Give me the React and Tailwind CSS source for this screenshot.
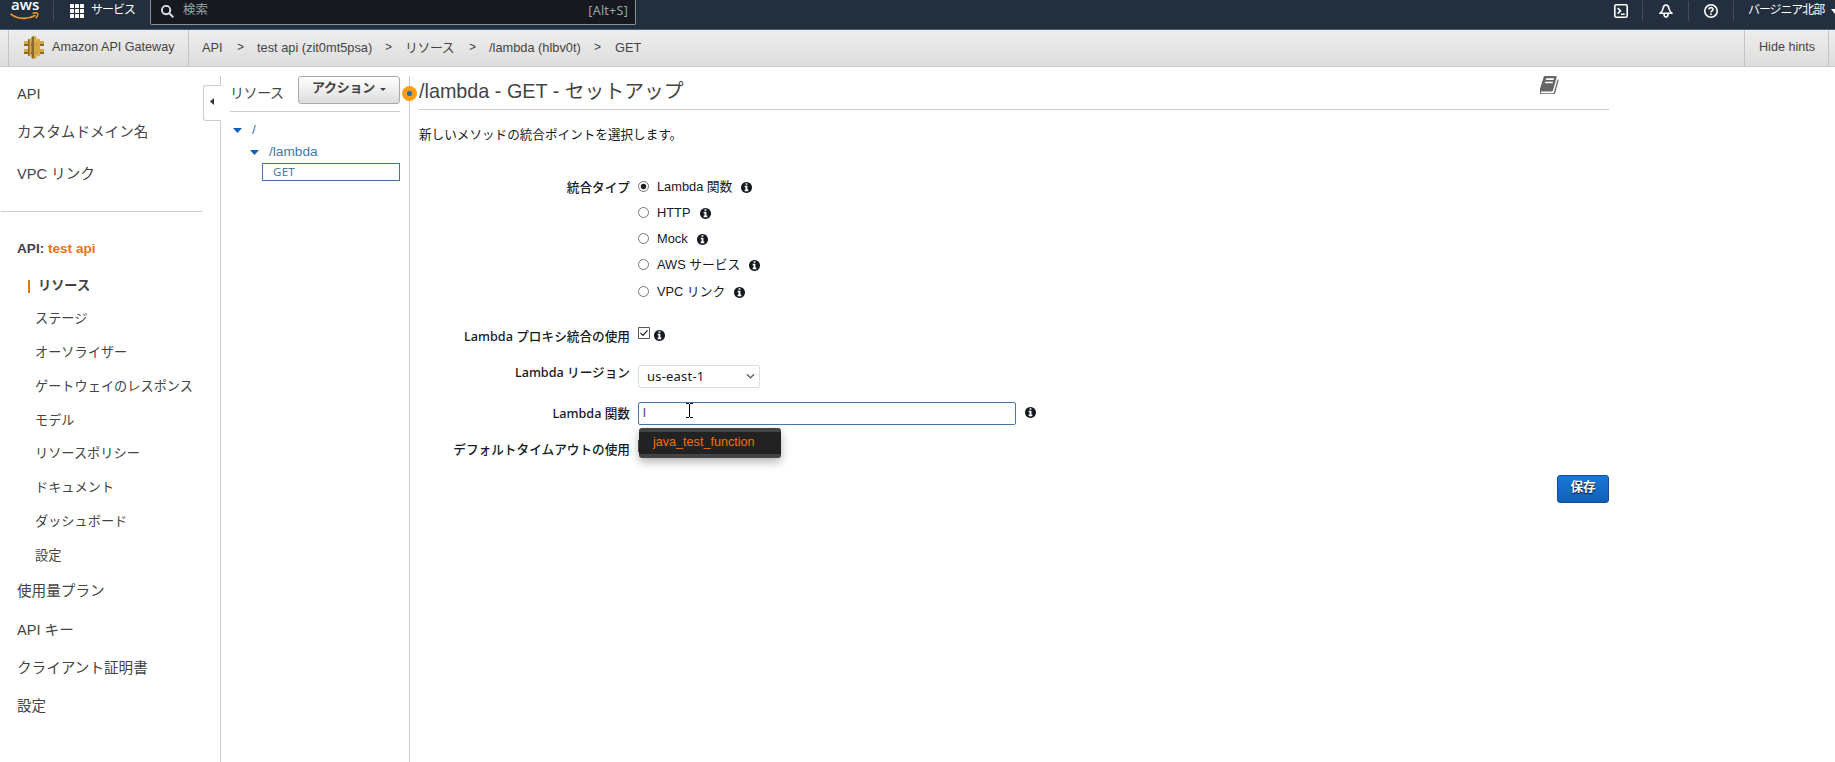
import React from "react";

const jp = "font-['Liberation_Sans','Noto_Sans_CJK_JP',sans-serif]";

function InfoIcon({ className = "" }) {
  return (
    <svg viewBox="128 128 1536 1536" className={"h-[11px] w-[11px] shrink-0 " + className} fill="#16191f">
      <path d="M1152 1376v-160q0-14-9-23t-23-9h-96v-512q0-14-9-23t-23-9h-320q-14 0-23 9t-9 23v160q0 14 9 23t23 9h96v320h-96q-14 0-23 9t-9 23v160q0 14 9 23t23 9h448q14 0 23-9t9-23zm-128-896v-160q0-14-9-23t-23-9h-192q-14 0-23 9t-9 23v160q0 14 9 23t23 9h192q14 0 23-9t9-23zm640 416q0 209-103 385.500t-279.500 279.500-385.500 103-385.500-103-279.500-279.500-103-385.500 103-385.500 279.500-279.500 385.500-103 385.500 103 279.500 279.500 103 385.500z" />
    </svg>
  );
}

function BookIcon() {
  return (
    <svg viewBox="60 200 1650 1400" preserveAspectRatio="none" className="ml-auto mr-[50px] h-[18px] w-[19px]" fill="#666">
      <path d="M1639 478q40 57 18 129l-275 906q-19 64-76.500 107.500t-122.500 43.500h-923q-77 0-148.500-53.500t-99.500-131.500q-24-67-2-127 0-4 3-27t4-37q1-8-3-21.500t-3-19.500q2-11 8-21t16.500-23.500 16.500-23.500q23-38 45-91.500t30-91.500q3-10 .5-30t-.5-28q3-11 17-28t17-23q21-36 42-92t25-90q1-9-2.500-32t.5-28q4-13 22-30.500t22-22.500q19-26 42.500-84.500t27.500-96.500q1-8-3-25.500t-2-26.500q2-8 9-18t18-23 17-21q8-12 16.500-30.500t15-35 16-36 19.500-32 26.500-23.500 36-11.500 47.500 5.500l-1 3q38-9 51-9h761q74 0 114 56t18 130l-274 906q-36 119-71.500 153.500t-128.500 34.500h-869q-27 0-38 15-11 16-1 43 24 70 144 70h923q29 0 56-15.500t35-41.500l300-987q7-22 5-57 38 15 59 43zm-1064 2q-4 13 2 22.500t20 9.500h608q13 0 25.500-9.500t16.500-22.500l21-64q4-13-2-22.500t-20-9.500h-608q-13 0-25.500 9.500t-16.500 22.500zm-83 256q-4 13 2 22.500t20 9.500h608q13 0 25.500-9.500t16.500-22.500l21-64q4-13-2-22.500t-20-9.500h-608q-13 0-25.500 9.500t-16.500 22.500z" />
    </svg>
  );
}

function Header() {
  return (
    <header className="flex h-[30px] items-start overflow-hidden border-b border-[#545b72] bg-[#232f3e] text-white">
      <div className="ml-[10px] flex w-[43px] flex-col">
        <span className="h-3 pl-[1px] font-['Open_Sans',sans-serif] text-[15px] leading-[9px] font-semibold">aws</span>
        <svg viewBox="0 0 29 8" className="h-[8px] w-[29px]" fill="none" stroke="#f79a1c">
          <path d="M0.500 1.800C8 7.600 18 7.800 25.500 3.300" strokeWidth="1.700" />
          <path d="M22.500 1.400c2-.6 4.300-.8 5 0s-.2 3.200-1.700 4.900" strokeWidth="1.400" />
        </svg>
      </div>
      <div className="mt-[1px] h-5 w-px bg-[#414c58]" />
      <svg viewBox="0 0 14 14" className="mt-1 ml-4 h-[14px] w-[14px]" fill="#fff">
        {[0, 5, 10].map((y) => [0, 5, 10].map((x) => <rect key={x + "-" + y} x={x} y={y} width="4" height="4" rx=".5" />))}
      </svg>
      <span className="ml-[7px] w-[59px] whitespace-nowrap text-[12px] leading-[21px] tracking-[-1px]">サービス</span>
      <div className="flex h-[25px] w-[486px] items-start rounded-b-[2px] border border-t-0 border-[#879596] bg-[#161920] text-[#95a5a6]">
        <svg viewBox="0 0 14 14" className="mt-[5px] ml-[10px] h-[13px] w-[13px]" fill="none" stroke="#e3e6e8" strokeWidth="2">
          <circle cx="5.500" cy="5.500" r="4.500" />
          <path d="M9 9l4.200 4.200" />
        </svg>
        <span className="ml-[9px] text-[12.500px] leading-[21px]">検索</span>
        <span className="mr-[7px] ml-auto font-['Noto_Sans',sans-serif] text-[12.500px] leading-[21px] tracking-[0.250px]">[Alt+S]</span>
      </div>
      <div className="ml-auto flex w-[221px] shrink-0">
        <svg viewBox="0 0 14 14" className="mt-1 h-[14px] w-[14px] shrink-0" fill="none" stroke="#fff" strokeWidth="1.600" strokeLinejoin="round">
          <rect x=".8" y=".8" width="12.400" height="12.400" rx="1.500" />
          <path d="M3.600 4l3 2.800-3 2.800M7 10.200h3.700" />
        </svg>
        <div className="ml-[14px] mt-[1px] h-5 w-px shrink-0 bg-[#414c58]" />
        <svg viewBox="0 0 14 14" className="mt-1 ml-4 h-[14px] w-[14px] shrink-0" fill="none" stroke="#fff" strokeWidth="1.600" strokeLinejoin="round">
          <path d="M7 1C4.900 1 4.300 2.600 4.100 4.300 3.900 6.500 3 7.700.9 9.300h12.200C11 7.700 10.100 6.500 9.900 4.300 9.700 2.600 9.100 1 7 1z" />
          <path d="M5 9.800c0 2.200.8 3.300 2 3.300s2-1.100 2-3.300" />
        </svg>
        <div className="ml-[15px] mt-[1px] h-5 w-px shrink-0 bg-[#414c58]" />
        <svg viewBox="0 0 14 14" className="mt-1 ml-[15px] h-[14px] w-[14px] shrink-0" fill="none" stroke="#fff" strokeWidth="1.600">
          <circle cx="7" cy="7" r="6.200" />
          <path d="M5 5.600c0-2.600 4-2.500 4-.2C9 7 7 6.900 7 8.400M7 9.500v1.500" />
        </svg>
        <div className="ml-[15px] mt-[1px] h-5 w-px shrink-0 bg-[#414c58]" />
        <span className="ml-[14px] w-[83px] shrink-0 whitespace-nowrap text-[12px] leading-[21px] tracking-[-1.100px]">バージニア北部</span>
        <svg viewBox="0 0 8 5" className="mt-[9px] h-[5px] w-[8px] shrink-0" fill="#fff">
          <path d="M0 0h8L4 5z" />
        </svg>
      </div>
    </header>
  );
}

function GatewayIcon() {
  return (
    <svg viewBox="0 0 20 23" className="-mt-px h-[23px] w-[20px] shrink-0">
      <path fill="#d9a741" d="M0 5h4V3.500l3-1V5h6V2.500l3 1V5h4v5h-4v3h4v5h-4v1.500l-3 1V18H7v2.500l-3-1V18H0v-5h4v-3H0z" />
      <path fill="#876929" d="M0 8h4v2H0zM0 16h4v2H0zM16 8h4v2h-4zM16 16h4v2h-4zM4 3.500l1.500-.5v17L4 19.500zM7 8h6v2H7zM7 16h6v2H7z" />
      <path fill="#876929" d="M7.500 1L10 0v23l-2.500-1z" />
      <path fill="#d9a741" d="M10 0l2.500 1v21L10 23z" />
    </svg>
  );
}

function Breadcrumbs() {
  return (
    <nav className="flex h-[37px] border-b border-[#ccc] bg-linear-to-b from-[#eee] to-[#ddd] pr-[6px] pl-2 text-[12.800px] leading-[35px] whitespace-nowrap text-[#444]">
      <div className="flex w-[181px] items-center border-x border-[#c4c4c4] pl-[15px]">
        <GatewayIcon />
        <span className="-mt-px ml-2 text-[12.600px]">Amazon API Gateway</span>
      </div>
      <span className="ml-[13px] w-[35px]">API</span>
      <span className="w-[20px] text-[12px]">&gt;</span>
      <span className="w-[128px]">test api (zit0mt5psa)</span>
      <span className="w-[20px] text-[12px]">&gt;</span>
      <span className="w-[64px] tracking-[-0.300px]">リソース</span>
      <span className="w-[20px] text-[12px]">&gt;</span>
      <span className="w-[105px]">/lambda (hlbv0t)</span>
      <span className="w-[21px] text-[12px]">&gt;</span>
      <span>GET</span>
      <div className="ml-auto w-[85px] border-x border-[#c4c4c4] pl-[14px] text-[12.600px]">Hide hints</div>
    </nav>
  );
}

const subItems = [
  ["ステージ", "mt-[13px]"],
  ["オーソライザー", "mt-[14px]"],
  ["ゲートウェイのレスポンス", "mt-[14px]"],
  ["モデル", "mt-[14px]"],
  ["リソースポリシー", "mt-[13px]"],
  ["ドキュメント", "mt-[14px]"],
  ["ダッシュボード", "mt-[14px]"],
  ["設定", "mt-[14px]"],
];

function Sidebar() {
  return (
    <aside className="flex w-[203px] shrink-0 flex-col pt-[17px] text-[14.600px] leading-5 whitespace-nowrap text-[#444]">
      <span className="ml-[17px]">API</span>
      <span className="mt-[18px] ml-[17px]">カスタムドメイン名</span>
      <span className="mt-[22px] ml-[17px]">VPC リンク</span>
      <div className="mt-[27px] ml-px h-px w-[201px] bg-[#ccc]" />
      <span className="mt-[27px] ml-[17px] text-[13.600px] font-bold">
        API: <span className="text-[#ec7211]">test api</span>
      </span>
      <span className="mt-[17px] ml-[28px] flex items-center text-[13.200px] font-bold">
        <span className="mr-[8px] h-[13px] w-[2px] bg-[#e07700]" />
        リソース
      </span>
      {subItems.map(([label, gap]) => (
        <span key={label} className={"ml-[35px] text-[13.200px] " + gap}>{label}</span>
      ))}
      <span className="mt-[15px] ml-[17px]">使用量プラン</span>
      <span className="mt-[19px] ml-[17px]">API キー</span>
      <span className="mt-[18px] ml-[17px]">クライアント証明書</span>
      <span className="mt-[18px] ml-[17px]">設定</span>
    </aside>
  );
}

function Caret() {
  return (
    <svg viewBox="0 0 9 5" className="h-[5px] w-[9px] shrink-0" fill="#0d62bd">
      <path d="M0 0h9L4.500 5z" />
    </svg>
  );
}

function ResourceTree() {
  return (
    <section className="flex w-[206px] shrink-0 pt-[9px]">
      <div className="flex w-[18px] shrink-0 flex-col">
        <div className="ml-auto h-[9px] w-px bg-[#ccc]" />
        <div className="flex h-[36px] items-center rounded-l-[3px] border border-r-0 border-[#ccc] pl-[6px]">
          <svg viewBox="0 0 4 7" className="-mt-[3px] h-[7px] w-[4px]" fill="#333">
            <path d="M4 0v7L0 3.500z" />
          </svg>
        </div>
        <div className="ml-auto w-px flex-1 bg-[#ccc]" />
      </div>
      <div className="ml-[9px] w-[170px] text-[#4577a8]">
        <div className="flex h-[36px] items-start border-b border-[#ccc]">
          <span className="mt-[7px] w-[68px] text-[14px] leading-5 tracking-[-0.400px] whitespace-nowrap text-[#444]">リソース</span>
          <button className="flex h-[28px] w-[102px] items-start justify-center rounded-[3px] border border-[#aaa] bg-linear-to-b from-white to-[#ddd] pt-[1px] text-[13px] leading-5 font-bold text-[#444]">
            <span className="tracking-[-0.300px]">アクション</span>
            <svg viewBox="0 0 6 3" className="mt-[10px] ml-[5px] h-[3px] w-[6px]" fill="#444">
              <path d="M0 0h6L3 3z" />
            </svg>
          </button>
        </div>
        <div className="mt-2 flex h-[20px] items-center pl-[3px] text-[13.700px] leading-5">
          <Caret />
          <span className="ml-[10px]">/</span>
        </div>
        <div className="mt-[2px] flex h-[20px] items-center pl-[20px] text-[13.700px] leading-5">
          <Caret />
          <span className="ml-[10px]">/lambda</span>
        </div>
        <div className="mt-[1px] ml-8 h-[18px] border border-[#4577a8] pl-[10px] font-['Noto_Sans',sans-serif] text-[11.500px] leading-[16px] tracking-[0.300px]">GET</div>
      </div>
    </section>
  );
}

function Radio({ checked }) {
  return (
    <svg viewBox="0 0 11 11" className="-mt-[2px] h-[11px] w-[11px] shrink-0">
      <circle cx="5.500" cy="5.500" r="5" fill="#fff" stroke="#767676" />
      {checked && <circle cx="5.500" cy="5.500" r="2.700" fill="#222" />}
    </svg>
  );
}

const types = [
  ["Lambda 関数", "mt-0", "w-[83px]", true],
  ["HTTP", "mt-[6px]", "w-[42px]"],
  ["Mock", "mt-[6px]", "w-[39px]"],
  ["AWS サービス", "mt-[6px]", "w-[91px]"],
  ["VPC リンク", "mt-[7px]", "w-[76px]"],
];

function Label({ children, className = "" }) {
  return (
    <div className={"h-5 w-[211px] shrink-0 text-right font-['Noto_Sans','Noto_Sans_CJK_JP',sans-serif] text-[12.650px] font-medium whitespace-nowrap " + className}>
      {children}
    </div>
  );
}

function Main() {
  return (
    <main className="flex min-w-0 flex-1 pt-[9px] text-[12.800px] leading-5 text-[#16191f]">
      <div className="relative w-px shrink-0 bg-[#ccc]">
        <div className="absolute top-[10px] left-[-7px] flex h-[15px] w-[15px] items-center justify-center rounded-full bg-[#ff9d0f]">
          <div className="h-[5px] w-[5px] rounded-full bg-[#146eb4]" />
        </div>
      </div>
      <div className="ml-[9px] w-[1190px]">
        <div className="flex h-[34px] items-start border-b border-[#ccc]">
          <h1 className="text-[19.800px] leading-[31px] whitespace-nowrap text-[#444]">/lambda - GET - セットアップ</h1>
          <BookIcon />
        </div>
        <p className="mt-[15px] text-[12.600px]">新しいメソッドの統合ポイントを選択します。</p>
        <div className="mt-[32px] flex">
          <Label>統合タイプ</Label>
          <div className="ml-[8px]">
            {types.map(([label, gap, width, checked]) => (
              <div key={label} className={"flex h-5 items-center " + gap}>
                <Radio checked={checked} />
                <span className={"ml-[8px] whitespace-nowrap " + width}>{label}</span>
                <InfoIcon className="ml-[1px]" />
              </div>
            ))}
          </div>
        </div>
        <div className="mt-[24px] flex">
          <Label>Lambda プロキシ統合の使用</Label>
          <svg viewBox="0 0 12 12" className="mt-[1px] ml-2 h-3 w-3" fill="#fff" stroke="#555">
            <path d="M.5.5h11v11H.5z" />
            <path d="M2.500 5.800l2.500 2.500 4.500-5" fill="none" stroke="#222" strokeWidth="1.200" />
          </svg>
          <InfoIcon className="mt-1 ml-1" />
        </div>
        <div className="mt-[17px] flex">
          <Label className="-mt-px">Lambda リージョン</Label>
          <div className="mt-[2px] ml-2 flex h-[23px] w-[122px] items-center justify-between rounded-[2px] border border-[#ddd] pr-1 pb-px pl-2 font-['Noto_Sans',sans-serif] text-[13px] tracking-[0.200px]">
            us-east-1
            <svg viewBox="0 0 10 6" className="h-[6px] w-[9px]" fill="none" stroke="#666" strokeWidth="1.600">
              <path d="M1 1l4 4 4-4" />
            </svg>
          </div>
        </div>
        <div className="mt-[14px] flex h-[23px]">
          <Label className="mt-[1px]">Lambda 関数</Label>
          <div className="relative ml-2 flex h-[23px] w-[378px] rounded-[2px] border border-[#4577a8] pl-1 leading-[19px] text-[#444]">
            l
            <svg viewBox="0 0 7 15" className="absolute top-0 left-[47px] h-[15px] w-[7px]" fill="none" stroke="#000">
              <path d="M0 .5h3M4 .5h3M0 14.500h3M4 14.500h3M3.500 1v13" />
            </svg>
            <div className="absolute top-[25px] left-0 z-10 h-[30px] w-[142px] rounded-[3px] bg-[#444] py-1 shadow-[0_4px_10px_rgba(0,0,0,0.3)]">
              <div className="h-[22px] bg-[#222] pl-[14px] text-[12.600px] leading-[20px] text-[#ec7211]">java_test_function</div>
            </div>
          </div>
          <InfoIcon className="mt-[5px] ml-[9px]" />
        </div>
        <div className="mt-[14px] flex">
          <Label>デフォルトタイムアウトの使用</Label>
          <div className="mt-[1px] ml-2 h-3 w-3 border border-[#555]" />
        </div>
        <div className="mt-[16px] flex justify-end">
          <button className="h-[28px] w-[52px] rounded-[3px] border border-[#0e4f98] bg-linear-to-b from-[#1977d8] to-[#1060b8] pb-[4px] text-[12.600px] leading-5 font-bold text-white text-shadow-[0_1px_1px_#000]">保存</button>
        </div>
      </div>
    </main>
  );
}

export default function App() {
  return (
    <div className={"flex h-[762px] w-[1835px] flex-col overflow-hidden bg-white " + jp}>
      <Header />
      <Breadcrumbs />
      <div className="flex min-h-0 flex-1">
        <Sidebar />
        <ResourceTree />
        <Main />
      </div>
    </div>
  );
}
